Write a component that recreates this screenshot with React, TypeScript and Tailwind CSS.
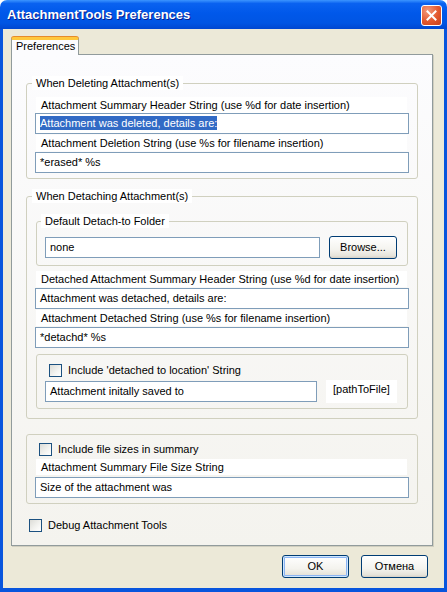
import React from "react";

type GroupProps = {
  legend?: string;
  legendLeft?: string;
  className?: string;
  children: React.ReactNode;
};

const Group = ({ legend, legendLeft = "left-[5px]", className = "", children }: GroupProps) => (
  <div className={`relative rounded-[3px] border border-[#D0D0BF] ${className}`}>
    {legend && (
      <span className={`absolute top-[-8px] ${legendLeft} bg-white px-[4px] leading-[14px] whitespace-nowrap`}>
        {legend}
      </span>
    )}
    {children}
  </div>
);

const Label = ({ children, className = "" }: { children: React.ReactNode; className?: string }) => (
  <div className={`ml-[9px] h-[16px] w-[371px] bg-white pl-[5px] leading-[16px] whitespace-nowrap ${className}`}>
    {children}
  </div>
);

const TextBox = ({ children, className = "" }: { children: React.ReactNode; className?: string }) => (
  <div
    className={`h-[21px] border border-[#7F9DB9] bg-white pl-[4px] leading-[19px] whitespace-nowrap overflow-hidden ${className}`}
  >
    {children}
  </div>
);

const Check = () => (
  <span className="block h-[13px] w-[13px] shrink-0 border border-[#1C5180] bg-[linear-gradient(135deg,#DCDCD7,#F4F4F1_60%,#FFFFFF)]" />
);

const XPButton = ({ children, isDefault = false, className = "" }: { children: React.ReactNode; isDefault?: boolean; className?: string }) => (
  <div
    className={`flex h-[23px] items-center justify-center rounded-[3px] border border-[#003C74] bg-[linear-gradient(to_bottom,#FFFFFF,#F4F3EE_60%,#E6E3DA_90%,#D6D0C5)] leading-[13px] ${
      isDefault ? "shadow-[inset_0_0_0_1px_#CEE7FF,inset_0_0_0_2px_#8CB4F2]" : ""
    } ${className}`}
  >
    {children}
  </div>
);

export default function App() {
  return (
    <div className="flex h-[592px] w-[447px] flex-col bg-white font-[family-name:'Liberation_Sans',Arial,sans-serif] text-[11px] text-black">
      {/* Title bar */}
      <div className="flex h-[29px] shrink-0 items-start justify-between rounded-t-[7px] bg-[linear-gradient(to_bottom,#3C95FF,#0A62F0_12%,#0058EA_45%,#0055E3_80%,#0047D0)] pl-[7px] pr-[5px]">
        <span className="mt-[7px] text-[13px] font-bold leading-[16px] text-white [text-shadow:1px_1px_0_#0A1C8C]">
          AttachmentTools Preferences
        </span>
        <div className="mt-[5px] flex h-[21px] w-[21px] items-center justify-center rounded-[3px] border border-white bg-[radial-gradient(circle_at_30%_25%,#F39A7C,#E3582E_55%,#C8401C)]">
          <svg width="11" height="11" viewBox="0 0 11 11">
            <path d="M1.5 1.5 L9.5 9.5 M9.5 1.5 L1.5 9.5" stroke="white" strokeWidth="2" strokeLinecap="square" />
          </svg>
        </div>
      </div>

      {/* Body */}
      <div className="flex flex-1 flex-col border-x-[3px] border-b-[4px] border-[#0855DD] bg-[#ECE9D8]">
        {/* Tab strip */}
        <div className="ml-[8px] mt-[8px] flex">
          <div className="relative z-10 -mb-px h-[18px] w-[68px] rounded-t-[3px] border-x border-t-[3px] border-x-[#919B9C] border-t-[#FFC83C] bg-[#FCFCFE] pl-[4px] leading-[12px] shadow-[0_-1px_0_#E68B2C]">
            Preferences
          </div>
        </div>

        {/* Tab panel */}
        <div className="ml-[8px] flex h-[492px] w-[422px] flex-col border border-[#919B9C] bg-[linear-gradient(to_bottom,#FCFCFE,#F4F3EE)] shadow-[1px_1px_0_#D0CEBF]">
          {/* Group 1 */}
          <Group legend="When Deleting Attachment(s)" className="ml-[14px] mt-[28px] h-[96px] w-[392px]">
            <Label className="mt-[13px]">Attachment Summary Header String (use %d for date insertion)</Label>
            <TextBox className="ml-[8px] w-[374px]">
              <span className="bg-[#316AC5] py-[1px] text-white">Attachment was deleted, details are:</span>
            </TextBox>
            <Label className="mt-[1px]">Attachment Deletion String (use %s for filename insertion)</Label>
            <TextBox className="ml-[8px] mt-[1px] w-[374px]">*erased* %s</TextBox>
          </Group>

          {/* Group 2 */}
          <Group legend="When Detaching Attachment(s)" className="ml-[14px] mt-[17px] h-[223px] w-[392px]">
            <Group legend="Default Detach-to Folder" legendLeft="left-[4px]" className="ml-[9px] mt-[24px] h-[45px] w-[372px]">
              <div className="ml-[8px] mt-[14px] flex h-[23px] items-center gap-[9px]">
                <TextBox className="w-[275px]">none</TextBox>
                <XPButton className="w-[68px]">Browse...</XPButton>
              </div>
            </Group>
            <Label className="mt-[5px]">Detached Attachment Summary Header String (use %d for date insertion)</Label>
            <TextBox className="ml-[8px] mt-[1px] w-[374px]">Attachment was detached, details are:</TextBox>
            <Label className="mt-[1px]">Attachment Detached String (use %s for filename insertion)</Label>
            <TextBox className="ml-[8px] mt-[1px] w-[374px]">*detachd* %s</TextBox>

            <Group className="ml-[9px] mt-[6px] h-[55px] w-[372px]">
              <div className="ml-[12px] mt-[9px] flex h-[13px] items-center gap-[6px]">
                <Check />
                <span className="leading-[13px]">Include 'detached to location' String</span>
              </div>
              <div className="ml-[8px] mt-[3px] flex h-[23px] items-center gap-[9px]">
                <TextBox className="h-[20px] w-[272px] leading-[18px]">Attachment initally saved to</TextBox>
                <div className="h-[23px] w-[71px] bg-white pl-[7px] leading-[18px]">[pathToFile]</div>
              </div>
            </Group>
          </Group>

          {/* Group 3 */}
          <Group className="ml-[14px] mt-[15px] h-[70px] w-[392px]">
            <div className="ml-[12px] mt-[8px] flex h-[13px] items-center gap-[6px]">
              <Check />
              <span className="leading-[13px]">Include file sizes in summary</span>
            </div>
            <Label className="mt-[3px]">Attachment Summary File Size String</Label>
            <TextBox className="ml-[8px] mt-[2px] w-[374px]">Size of the attachment was</TextBox>
          </Group>

          {/* Debug */}
          <div className="ml-[17px] mt-[15px] flex h-[13px] items-center gap-[6px]">
            <Check />
            <span className="leading-[13px]">Debug Attachment Tools</span>
          </div>
        </div>

        {/* Buttons */}
        <div className="mt-[9px] flex justify-end gap-[12px] pr-[16px]">
          <XPButton isDefault className="w-[67px]">
            OK
          </XPButton>
          <XPButton className="w-[67px]">Отмена</XPButton>
        </div>
      </div>
    </div>
  );
}
